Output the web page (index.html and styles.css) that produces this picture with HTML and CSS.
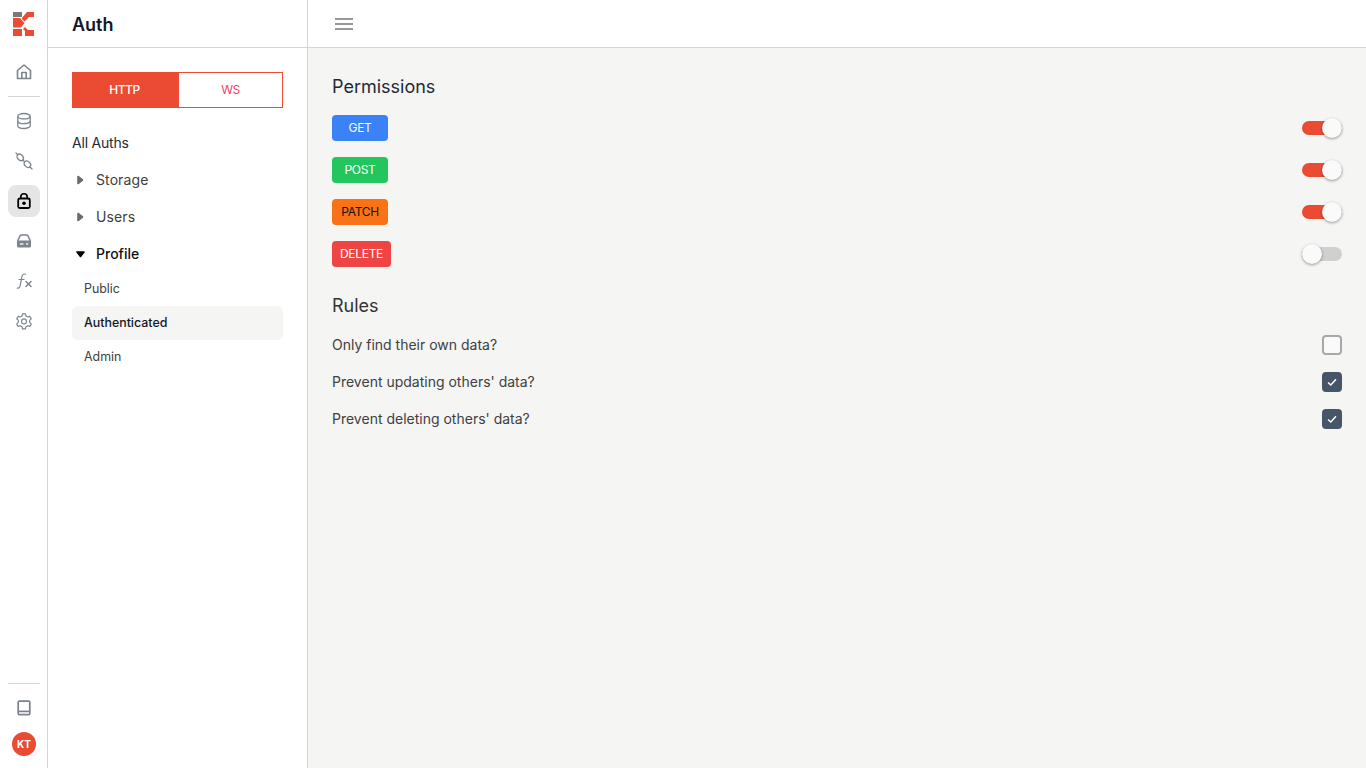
FILE: index.html
```html
<!DOCTYPE html>
<html lang="en">
<head>
  <meta charset="UTF-8" />
  <title>Auth</title>
  <link rel="stylesheet" href="styles.css">
</head>
<body>
  <aside class="rail">
    <div class="rail-top">
      <svg class="logo" width="21" height="24" viewBox="0 0 21 24">
        <rect x="0" y="0" width="9" height="5" fill="#7a7a7a"/>
        <path d="M14 0H21V5H16L11.5 9.5L8.5 6.5Z" fill="#ec4b33"/>
        <path d="M0 6H7L11.5 11L8 15.5H0Z" fill="#ec4b33"/>
        <path d="M10 17L12 15L15 18H21V24H12V19Z" fill="#ec4b33"/>
        <rect x="0" y="17" width="9" height="7" fill="#ec4b33"/>
      </svg>
      <a class="rail-btn rail-home" href="#">
        <svg width="18" height="18" viewBox="0 0 18 18" fill="none" stroke="#7b838c" stroke-width="1.6" stroke-linejoin="round"><path d="M2.5 15.5V7.5L9 2L15.5 7.5V15.5Z"/><path d="M6.8 15.5V9.5H11.2V15.5"/></svg>
      </a>
      <hr class="rail-line">
      <a class="rail-btn" href="#">
        <svg width="18" height="18" viewBox="0 0 18 18" fill="none" stroke="#7b838c" stroke-width="1.3"><ellipse cx="9" cy="4.2" rx="6.2" ry="2.7"/><path d="M2.8 4.2V13.8C2.8 15.3 5.6 16.5 9 16.5S15.2 15.3 15.2 13.8V4.2"/><path d="M2.8 9C2.8 10.5 5.6 11.7 9 11.7S15.2 10.5 15.2 9"/></svg>
      </a>
      <a class="rail-btn" href="#">
        <svg width="18" height="18" viewBox="0 0 18 18" fill="none" stroke="#7b838c" stroke-width="1.3" stroke-linecap="round"><path d="M1 1L2.8 2.8"/><ellipse cx="5.2" cy="5.4" rx="3.6" ry="2.7" transform="rotate(45 5.2 5.4)"/><path d="M7.6 8L9.6 9.8"/><ellipse cx="12.4" cy="12.2" rx="3.6" ry="2.7" transform="rotate(45 12.4 12.2)"/><path d="M15 15L17 17"/></svg>
      </a>
      <a class="rail-btn active" href="#">
        <svg width="18" height="18" viewBox="0 0 18 18"><path d="M5.8 7V5A3.2 3.2 0 0 1 12.2 5V7" fill="none" stroke="#000" stroke-width="1.6"/><rect x="3.2" y="6.5" width="11.6" height="9.5" rx="1.5" fill="none" stroke="#000" stroke-width="1.8"/><circle cx="9" cy="11.2" r="1.8" fill="#000"/></svg>
      </a>
      <a class="rail-btn" href="#">
        <svg width="18" height="18" viewBox="0 0 18 18" fill="none" stroke="#7b838c" stroke-width="1.5"><path d="M2.5 9.5L5 3.8C5.3 3.2 5.8 3 6.3 3H11.7C12.2 3 12.7 3.2 13 3.8L15.5 9.5"/><rect x="2" y="8.5" width="14" height="7" rx="1.6" fill="#7b838c" stroke="none"/><path d="M4.8 12H8.5" stroke="#fff" stroke-width="1.3"/><path d="M11 12H13.2" stroke="#fff" stroke-width="1.3"/></svg>
      </a>
      <a class="rail-btn" href="#">
        <svg width="18" height="18" viewBox="0 0 18 18" fill="none" stroke="#7b838c" stroke-width="1.2" stroke-linecap="round"><path d="M2 16C4.5 16.5 5 15 5.5 12L6.8 5C7.3 2.5 8.5 1.5 10.5 2.2"/><path d="M4 7.5H9"/><path d="M11 9.5L16 14.5" stroke-width="1.5"/><path d="M16 9.5L11 14.5" stroke-width="1.5"/></svg>
      </a>
      <a class="rail-btn" href="#">
        <svg width="18" height="18" viewBox="0 0 24 24" fill="none" stroke="#7b838c" stroke-width="1.5" stroke-linejoin="round"><path d="M10 2.5H14L14.6 5.4L16.9 6.7L19.7 5.8L21.7 9.2L19.5 11.2V13.8L21.7 15.8L19.7 19.2L16.9 18.3L14.6 19.6L14 22.5H10L9.4 19.6L7.1 18.3L4.3 19.2L2.3 15.8L4.5 13.8V11.2L2.3 9.2L4.3 5.8L7.1 6.7L9.4 5.4Z"/><circle cx="12" cy="12.5" r="3.3"/></svg>
      </a>
    </div>
    <div class="rail-bottom">
      <hr class="rail-line">
      <a class="rail-btn" href="#">
        <svg width="18" height="18" viewBox="0 0 18 18" fill="none" stroke="#7b838c" stroke-width="1.7"><rect x="3.2" y="2.2" width="11.6" height="13.4" rx="1"/><path d="M3.2 12.4H14.8"/></svg>
      </a>
      <div class="avatar">KT</div>
    </div>
  </aside>

  <aside class="side">
    <div class="side-head">Auth</div>
    <div class="side-body">
      <div class="tabs">
        <a class="tab tab-on" href="#">HTTP</a>
        <a class="tab" href="#">WS</a>
      </div>
      <nav class="tree">
        <a class="tree-item tree-root" href="#">All Auths</a>
        <a class="tree-item" href="#"><svg class="arrow" width="24" height="12" viewBox="0 0 24 12"><path d="M6 2.5L10.5 6L6 9.5Z" fill="#6b6b6b" stroke="#6b6b6b" stroke-width="1.6" stroke-linejoin="round"/></svg>Storage</a>
        <a class="tree-item" href="#"><svg class="arrow" width="24" height="12" viewBox="0 0 24 12"><path d="M6 2.5L10.5 6L6 9.5Z" fill="#6b6b6b" stroke="#6b6b6b" stroke-width="1.6" stroke-linejoin="round"/></svg>Users</a>
        <a class="tree-item tree-open" href="#"><svg class="arrow" width="24" height="12" viewBox="0 0 24 12"><path d="M5 4H12L8.5 8.5Z" fill="#000" stroke="#000" stroke-width="1.6" stroke-linejoin="round"/></svg>Profile</a>
        <a class="sub-item" href="#">Public</a>
        <a class="sub-item sub-active" href="#">Authenticated</a>
        <a class="sub-item" href="#">Admin</a>
      </nav>
    </div>
  </aside>

  <div class="content">
    <header class="topbar">
      <svg width="20" height="14" viewBox="0 0 20 14"><path d="M1 2H19M1 7H19M1 12H19" stroke="#777" stroke-width="1.6"/></svg>
    </header>
    <main class="panel">
      <h2 class="title">Permissions</h2>
      <div class="perm-row">
        <span class="method get">GET</span>
        <span class="switch on"><span class="knob"></span></span>
      </div>
      <div class="perm-row">
        <span class="method post">POST</span>
        <span class="switch on"><span class="knob"></span></span>
      </div>
      <div class="perm-row">
        <span class="method patch">PATCH</span>
        <span class="switch on"><span class="knob"></span></span>
      </div>
      <div class="perm-row">
        <span class="method delete">DELETE</span>
        <span class="switch"><span class="knob"></span></span>
      </div>

      <h2 class="title title-rules">Rules</h2>
      <div class="rule-row">
        <span>Only find their own data?</span>
        <span class="check"></span>
      </div>
      <div class="rule-row">
        <span>Prevent updating others' data?</span>
        <span class="check checked"><svg width="12" height="12" viewBox="0 0 12 12" fill="none" stroke="#fff" stroke-width="1.5"><path d="M2 6.5L4.8 9L10 3.2"/></svg></span>
      </div>
      <div class="rule-row">
        <span>Prevent deleting others' data?</span>
        <span class="check checked"><svg width="12" height="12" viewBox="0 0 12 12" fill="none" stroke="#fff" stroke-width="1.5"><path d="M2 6.5L4.8 9L10 3.2"/></svg></span>
      </div>
    </main>
  </div>
</body>
</html>
```
FILE: styles.css
```css
/* Reset */
* {
  box-sizing: border-box;
  margin: 0;
  padding: 0;
}
html, body {
  height: 100%;
}
body {
  font-family: 'Inter', 'Liberation Sans', sans-serif;
  display: flex;
  height: 768px;
  overflow: hidden;
  background: #fff;
  color: #1f2937;
}
a {
  color: inherit;
  text-decoration: none;
}

/* Icon rail */
.rail {
  width: 48px;
  flex: none;
  border-right: 1px solid #d4d4d4;
  display: flex;
  flex-direction: column;
  justify-content: space-between;
  padding: 12px 7px 12px 8px;
}
.rail-top, .rail-bottom {
  display: flex;
  flex-direction: column;
  align-items: center;
}
.logo {
  display: block;
  margin-left: -1px;
}
.rail-btn {
  width: 32px;
  height: 32px;
  margin-top: 8px;
  display: flex;
  align-items: center;
  justify-content: center;
  border-radius: 8px;
}
.rail-btn.active {
  background: #e5e5e5;
}
.rail-home {
  margin-top: 20px;
}
.rail-line {
  width: 32px;
  border: none;
  border-top: 1px solid #d4d4d4;
  margin: 8px 0 0;
}
.rail-bottom .rail-line {
  margin: 0 0 1px;
}
.rail-bottom .rail-btn {
  margin-top: 7px;
}
.avatar {
  width: 24px;
  height: 24px;
  margin-top: 8px;
  border-radius: 50%;
  background: #ec4b33;
  color: #fff;
  font-size: 10px;
  font-weight: 700;
  display: flex;
  align-items: center;
  justify-content: center;
}

/* Sidebar */
.side {
  width: 260px;
  flex: none;
  border-right: 1px solid #d4d4d4;
}
.side-head {
  height: 48px;
  border-bottom: 1px solid #d4d4d4;
  padding: 2px 24px 0;
  display: flex;
  align-items: center;
  font-size: 18px;
  font-weight: 600;
  color: #111827;
}
.side-body {
  padding: 24px 24px 0;
}
.tabs {
  display: flex;
  width: 211px;
  height: 36px;
  border: 1px solid #ec4b33;
}
.tab {
  flex: 1;
  display: flex;
  align-items: center;
  justify-content: center;
  padding-bottom: 2px;
  font-size: 12px;
  letter-spacing: -0.4px;
  color: #f43f5e;
}
.tab-on {
  flex: none;
  width: 106px;
  padding-right: 3px;
  background: #ec4b33;
  color: #fff;
  font-weight: 500;
}
.tree {
  margin-top: 16px;
  display: flex;
  flex-direction: column;
}
.tree-item {
  height: 37px;
  display: flex;
  align-items: center;
  font-size: 14px;
  letter-spacing: 0.1px;
  color: #404040;
}
.tree-root {
  color: #1f2937;
  letter-spacing: -0.2px;
}
.tree-open {
  color: #111;
  font-weight: 500;
  letter-spacing: 0;
}
.arrow {
  flex: none;
  display: block;
}
.sub-item {
  height: 34px;
  padding: 0 12px 2px;
  display: flex;
  align-items: center;
  font-size: 12.4px;
  color: #404040;
  border-radius: 6px;
}
.sub-active {
  background: #f5f5f4;
  color: #111827;
  font-weight: 500;
}

/* Main */
.content {
  flex: 1;
  min-width: 0;
  display: flex;
  flex-direction: column;
}
.topbar {
  height: 48px;
  flex: none;
  border-bottom: 1px solid #d4d4d4;
  padding: 0 26px;
  display: flex;
  align-items: center;
}
.panel {
  flex: 1;
  background: #f5f5f4;
  padding: 24px;
}
.title {
  font-size: 18px;
  font-weight: 400;
  line-height: 30px;
  color: #1f2937;
}
.title-rules {
  margin-top: 24px;
  color: #333;
}
.perm-row {
  height: 26px;
  margin-top: 16px;
  display: flex;
  align-items: center;
  justify-content: space-between;
}
.title + .perm-row {
  margin-top: 13px;
}
.method {
  min-width: 56px;
  height: 26px;
  padding: 0 8px 2px;
  border-radius: 4px;
  display: flex;
  align-items: center;
  justify-content: center;
  font-size: 12px;
  letter-spacing: -0.3px;
  color: #fff;
}
.get { background: #3b82f6; }
.post { background: #22c55e; }
.patch { background: #f97316; color: #111; }
.delete { background: #ef4444; }

.switch {
  width: 40px;
  height: 14px;
  border-radius: 7px;
  background: #d0d0d0;
  position: relative;
}
.switch.on {
  background: #ec4b33;
}
.knob {
  position: absolute;
  top: -3px;
  left: 0;
  width: 20px;
  height: 20px;
  border-radius: 50%;
  background: #fafafa;
  box-shadow: 0 1px 3px rgba(0, 0, 0, 0.4);
}
.on .knob {
  left: 20px;
}

.rule-row {
  height: 37px;
  display: flex;
  align-items: center;
  justify-content: space-between;
  font-size: 14px;
  color: #404040;
}
.title-rules + .rule-row {
  margin-top: 5px;
}
.check {
  width: 20px;
  height: 20px;
  border: 2px solid #a8a8a8;
  border-radius: 4px;
  background: #fafafa;
  display: flex;
  align-items: center;
  justify-content: center;
}
.check.checked {
  background: #475569;
  border-color: #475569;
}
```
